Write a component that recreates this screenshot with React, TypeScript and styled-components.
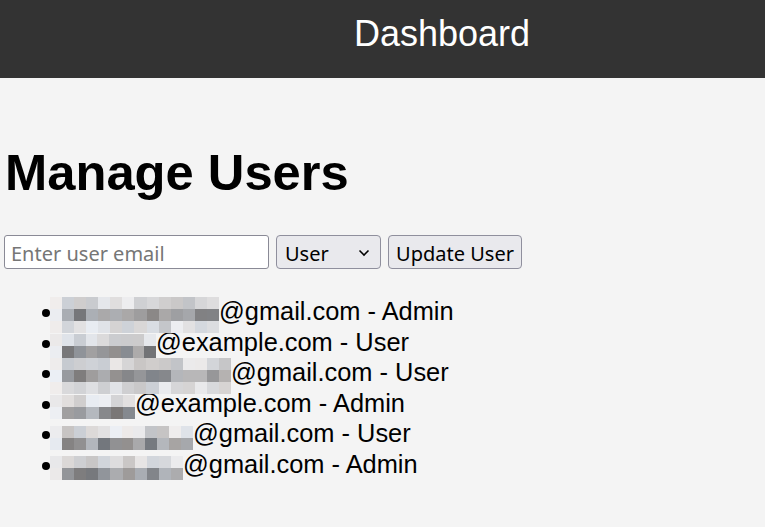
import React from "react";
import styled, { createGlobalStyle } from "styled-components";

const Global = createGlobalStyle`
  html, body { margin: 0; padding: 0; background: #f4f4f4; }
  body { font-family: "Liberation Sans", Arial, sans-serif; color: #000; }
`;

const Header = styled.header`
  background: #333333;
  color: #ffffff;
  height: 78px;
  box-sizing: border-box;
  padding: 13px 0 0 354px;
`;

const HeaderTitle = styled.h2`
  margin: 0;
  font-size: 36px;
  font-weight: 400;
  line-height: 41px;
`;

const Main = styled.main`
  padding: 0 4px;
`;

const Title = styled.h1`
  margin: 65px 0 33px 1px;
  font-size: 50.7px;
  font-weight: 700;
  line-height: 59px;
`;

const Form = styled.div`
  display: flex;
  gap: 7px;
  height: 34px;
`;

const controlFont = `font-family: "Noto Sans", "Open Sans", sans-serif; font-size: 20px;`;

const EmailInput = styled.input`
  width: 265px;
  height: 34px;
  box-sizing: border-box;
  border: 1px solid #8a8a96;
  border-radius: 3px;
  background: #ffffff;
  padding: 2px 6px 0;
  ${controlFont}
  color: #000;
  outline: none;
  &::placeholder { color: #767676; }
`;

const SelectWrap = styled.div`
  position: relative;
  width: 105px;
  height: 34px;
`;

const Select = styled.select`
  appearance: none;
  width: 100%;
  height: 100%;
  box-sizing: border-box;
  border: 1px solid #8f8f9d;
  border-radius: 4px;
  background: #e9e9ed;
  padding: 2px 0 0 8px;
  ${controlFont}
  color: #000;
`;

const Chevron = styled.svg`
  position: absolute;
  right: 11px;
  top: 14px;
  pointer-events: none;
`;

const Button = styled.button`
  width: 134px;
  height: 34px;
  box-sizing: border-box;
  border: 1px solid #8f8f9d;
  border-radius: 4px;
  background: #e9e9ed;
  padding: 2px 0 0;
  ${controlFont}
  color: #000;
`;

const UserList = styled.ul`
  margin: 27px 0 0;
  padding-left: 60px;
  font-size: 25.4px;
  line-height: 30.6px;
  list-style: disc;
`;

const Item = styled.li``;

const Redacted = styled.span<{ $cols: number; $rows: number; $width: number }>`
  display: inline-grid;
  vertical-align: middle;
  width: ${(p) => p.$width}px;
  height: ${(p) => p.$rows * 12}px;
  margin: ${(p) => -(p.$rows * 12 - 24) / 2}px 0 ${(p) => -(p.$rows * 12 - 24) / 2}px -14px;
  grid-template-columns: 12px repeat(${(p) => p.$cols}, 1fr);
  grid-template-rows: repeat(${(p) => p.$rows}, 1fr);
  position: relative;
  top: 2px;
`;

const Cell = styled.span`
  display: block;
`;

function seeded(seed: number) {
  let s = seed;
  return () => {
    s = (s * 9301 + 49297) % 233280;
    return s / 233280;
  };
}

function Mosaic({ cols, rows, width, seed }: { cols: number; rows: number; width: number; seed: number }) {
  const rnd = seeded(seed);
  const cells: React.ReactNode[] = [];
  for (let r = 0; r < rows; r++) {
    const dark = r === 1;
    for (let c = 0; c <= cols; c++) {
      let v: number;
      if (c === 0) v = 232 + Math.floor(rnd() * 8);
      else if (dark) v = 115 + Math.floor(rnd() * 70);
      else v = 195 + Math.floor(rnd() * 45);
      const tint = Math.floor(rnd() * 8) - 4;
      cells.push(
        <Cell key={`${r}-${c}`} style={{ background: `rgb(${v + tint},${v},${v - tint + 2})` }} />
      );
    }
  }
  return (
    <Redacted $cols={cols} $rows={rows} $width={width}>
      {cells}
    </Redacted>
  );
}

const users = [
  { cols: 13, rows: 3, end: 219, domain: "@gmail.com", role: "Admin" },
  { cols: 8, rows: 2, end: 156, domain: "@example.com", role: "User" },
  { cols: 14, rows: 3, end: 231, domain: "@gmail.com", role: "User" },
  { cols: 6, rows: 2, end: 135, domain: "@example.com", role: "Admin" },
  { cols: 11, rows: 2, end: 193, domain: "@gmail.com", role: "User" },
  { cols: 10, rows: 2, end: 183, domain: "@gmail.com", role: "Admin" },
];

export default function App() {
  return (
    <>
      <Global />
      <Header>
        <HeaderTitle>Dashboard</HeaderTitle>
      </Header>
      <Main>
        <Title>Manage Users</Title>
        <Form>
          <EmailInput type="email" placeholder="Enter user email" />
          <SelectWrap>
            <Select defaultValue="user">
              <option value="user">User</option>
              <option value="admin">Admin</option>
            </Select>
            <Chevron width="12" height="8" viewBox="0 0 12 8">
              <path d="M1.5 1.5 L6 6 L10.5 1.5" fill="none" stroke="#000" strokeWidth="1.6" />
            </Chevron>
          </SelectWrap>
          <Button>Update User</Button>
        </Form>
        <UserList>
          {users.map((u, i) => (
            <Item key={i}>
              <Mosaic cols={u.cols} rows={u.rows} width={u.end - 50} seed={i * 37 + 11} />
              {u.domain} - {u.role}
            </Item>
          ))}
        </UserList>
      </Main>
    </>
  );
}
